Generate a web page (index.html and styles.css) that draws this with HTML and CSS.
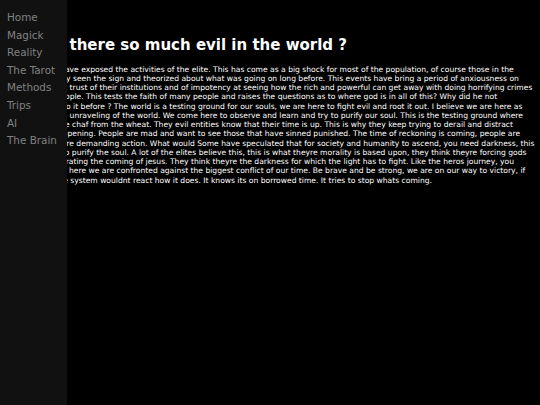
FILE: index.html
```
<!DOCTYPE html>
<html lang="en">
<head>
<meta charset="utf-8">
<title>Why is there so much evil in the world ?</title>
<link rel="stylesheet" href="styles.css">
</head>
<body>
<nav class="sidenav">
  <a href="#">Home</a>
  <a href="#">Magick</a>
  <a href="#">Reality</a>
  <a href="#">The Tarot</a>
  <a href="#">Methods</a>
  <a href="#">Trips</a>
  <a href="#">AI</a>
  <a href="#">The Brain</a>
</nav>
<main class="main">
  <h1 class="title">Why is there so much evil in the world ?</h1>
  <p class="article">Some people have exposed the activities of the elite. This has come as a big shock for most of the population, of course those in the<br>
knowing already seen the sign and theorized about what was going on long before. This events have bring a period of anxiousness on<br>
the people, lost trust of their institutions and of impotency at seeing how the rich and powerful can get away with doing horrifying crimes<br>
towards the people. This tests the faith of many people and raises the questions as to where god is in all of this? Why did he not<br>
put a full stop to it before ? The world is a testing ground for our souls, we are here to fight evil and root it out. I believe we are here as<br>
watchers of the unraveling of the world. We come here to observe and learn and try to purify our soul. This is the testing ground where<br>
we separate the chaf from the wheat. They evil entities know that their time is up. This is why they keep trying to derail and distract<br>
from whats happening. People are mad and want to see those that have sinned punished. The time of reckoning is coming, people are<br>
outraged and are demanding action. What would Some have speculated that for society and humanity to ascend, you need darkness, this<br>
is a necessity to purify the soul. A lot of the elites believe this, this is what theyre morality is based upon, they think theyre forcing gods<br>
hand by accelerating the coming of jesus. They think theyre the darkness for which the light has to fight. Like the heros journey, you<br>
must fight. And here we are confronted against the biggest conflict of our time. Be brave and be strong, we are on our way to victory, if<br>
we fight on, the system wouldnt react how it does. It knows its on borrowed time. It tries to stop whats coming.</p>
</main>
</body>
</html>
```
FILE: styles.css
```
html {
  overflow: hidden;
}
body {
  margin: 0;
  background: #000;
  color: #fff;
  font-family: "DejaVu Sans", Verdana, sans-serif;
}
.sidenav {
  position: fixed;
  top: 0;
  left: 0;
  width: 67px;
  height: 100%;
  background: #111;
  padding-top: 9px;
  box-sizing: border-box;
  overflow: hidden;
  z-index: 1;
}
.sidenav a {
  display: block;
  padding-left: 7px;
  font-size: 10.4px;
  line-height: 17.6px;
  color: #818181;
  text-decoration: none;
  white-space: nowrap;
}
.main {
  padding: 37px 8px 0 8px;
}
.title {
  margin: 0;
  font-size: 15px;
  font-weight: bold;
  line-height: 17.5px;
}
.article {
  margin: 10px 0 0 0;
  font-size: 7.6px;
  line-height: 9.25px;
  white-space: nowrap;
  color: #fff;
}
```
